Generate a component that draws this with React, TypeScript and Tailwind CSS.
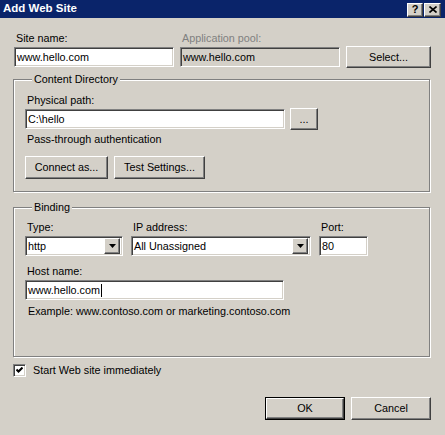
import React from 'react';

const raised =
  'border border-t-white border-l-white border-b-[#404040] border-r-[#404040] shadow-[inset_-1px_-1px_0_#808080,inset_1px_1px_0_#d4d0c8] bg-[#d4d0c8]';
const sunken =
  'border border-t-[#808080] border-l-[#808080] border-b-white border-r-white shadow-[inset_1px_1px_0_#404040,inset_-1px_-1px_0_#d4d0c8]';

const Label: React.FC<{ children: React.ReactNode; muted?: boolean }> = ({ children, muted }) => (
  <div className={`pl-[2px] leading-[13px] h-[13px] whitespace-nowrap ${muted ? 'text-[#808080]' : ''}`}>{children}</div>
);

const TextBox: React.FC<{ value: string; className?: string; disabled?: boolean; caret?: boolean }> = ({
  value,
  className = '',
  disabled,
  caret,
}) => (
  <div className={`${sunken} h-[20px] flex items-center pl-[2px] ${disabled ? 'bg-[#d4d0c8]' : 'bg-white'} ${className}`}>
    <span className="whitespace-nowrap leading-none">{value}</span>
    {caret && <span className="inline-block w-px h-[13px] bg-black ml-px" />}
  </div>
);

const Combo: React.FC<{ value: string; className?: string }> = ({ value, className = '' }) => (
  <div className={`${sunken} bg-white h-[20px] flex items-center justify-between pl-[2px] pr-[2px] ${className}`}>
    <span className="whitespace-nowrap leading-none">{value}</span>
    <div className={`${raised} w-[16px] h-[16px] flex items-center justify-center`}>
      <svg width="7" height="4" viewBox="0 0 7 4">
        <path d="M0 0 H7 L3.5 4 Z" fill="#000" />
      </svg>
    </div>
  </div>
);

const Button: React.FC<{ children: React.ReactNode; className?: string; isDefault?: boolean }> = ({
  children,
  className = '',
  isDefault,
}) =>
  isDefault ? (
    <div className={`border border-black ${className}`}>
      <div className={`${raised} w-full h-full flex items-center justify-center`}>{children}</div>
    </div>
  ) : (
    <div className={`${raised} flex items-center justify-center whitespace-nowrap ${className}`}>{children}</div>
  );

const Group: React.FC<{ title: string; className?: string; children: React.ReactNode }> = ({
  title,
  className = '',
  children,
}) => (
  <fieldset
    className={`border border-[#808080] shadow-[1px_1px_0_#fff,inset_1px_1px_0_#fff] w-[417px] pl-[11px] ${className}`}
  >
    <legend className="ml-[7px] px-[2px] bg-[#d4d0c8] leading-[13px]">{title}</legend>
    {children}
  </fieldset>
);

export default function App() {
  return (
    <div className="w-[445px] h-[435px] bg-[#d4d0c8] overflow-hidden font-['Liberation_Sans',Arial,sans-serif] text-[10.8px] text-black">
      {/* title bar */}
      <div className="h-[18px] bg-[#0a246a] flex items-center justify-between pl-[3px] pr-[4px]">
        <span className="text-white font-bold text-[11.5px] leading-none">Add Web Site</span>
        <div className="flex gap-[1px] pt-px">
          <div className={`${raised} w-[16px] h-[14px] flex items-center justify-center font-bold text-[11px] leading-none`}>
            ?
          </div>
          <div className={`${raised} w-[17px] h-[14px] flex items-center justify-center`}>
            <svg width="8" height="7" viewBox="0 0 8 7">
              <path d="M0.5 0.5 L7.5 6.5 M7.5 0.5 L0.5 6.5" stroke="#000" strokeWidth="1.6" />
            </svg>
          </div>
        </div>
      </div>

      <div className="pl-[13px] pt-[14px]">
        {/* site name row */}
        <div className="pl-px grid grid-cols-[160px_160px_85px] gap-x-[6px] gap-y-[1px] items-center">
          <Label>Site name:</Label>
          <Label muted>Application pool:</Label>
          <div />
          <TextBox value="www.hello.com" />
          <TextBox value="www.hello.com" disabled />
          <Button className="h-[22px]">Select...</Button>
        </div>

        <Group title="Content Directory" className="mt-[5px] pt-[8px] pb-[12px]">
          <Label>Physical path:</Label>
          <div className="flex items-center gap-[5px] mt-px">
            <TextBox value="C:\hello" className="w-[260px]" />
            <Button className="w-[28px] h-[22px]">...</Button>
          </div>
          <div className="mt-[3px] pl-[2px] leading-[13px]">Pass-through authentication</div>
          <div className="flex gap-[6px] mt-[10px]">
            <Button className="w-[83px] h-[23px]">Connect as...</Button>
            <Button className="w-[91px] h-[23px]">Test Settings...</Button>
          </div>
        </Group>

        <Group title="Binding" className="mt-[9px] pt-[7px] pb-[38px]">
          <div className="grid grid-cols-[98px_180px_49px] gap-x-[8px] gap-y-[2px]">
            <Label>Type:</Label>
            <Label>IP address:</Label>
            <Label>Port:</Label>
            <Combo value="http" />
            <Combo value="All Unassigned" />
            <TextBox value="80" />
          </div>
          <div className="mt-[9px]">
            <Label>Host name:</Label>
          </div>
          <TextBox value="www.hello.com" caret className="w-[259px] mt-[2px]" />
          <div className="mt-[5px] pl-[3px] leading-[13px]">Example: www.contoso.com or marketing.contoso.com</div>
        </Group>

        <div className="flex items-center mt-[7px]">
          <div className={`${sunken} bg-white w-[13px] h-[13px] flex items-center justify-center`}>
            <svg width="7" height="7" viewBox="0 0 7 7">
              <path d="M0.5 2.5 L2.5 4.5 L6.5 0.5" stroke="#000" strokeWidth="2" fill="none" />
            </svg>
          </div>
          <span className="ml-[7px] leading-[13px]">Start Web site immediately</span>
        </div>

        <div className="flex justify-end gap-[6px] pr-[14px] mt-[20px]">
          <Button isDefault className="w-[80px] h-[23px]">
            OK
          </Button>
          <Button className="w-[80px] h-[23px]">Cancel</Button>
        </div>
      </div>
    </div>
  );
}
